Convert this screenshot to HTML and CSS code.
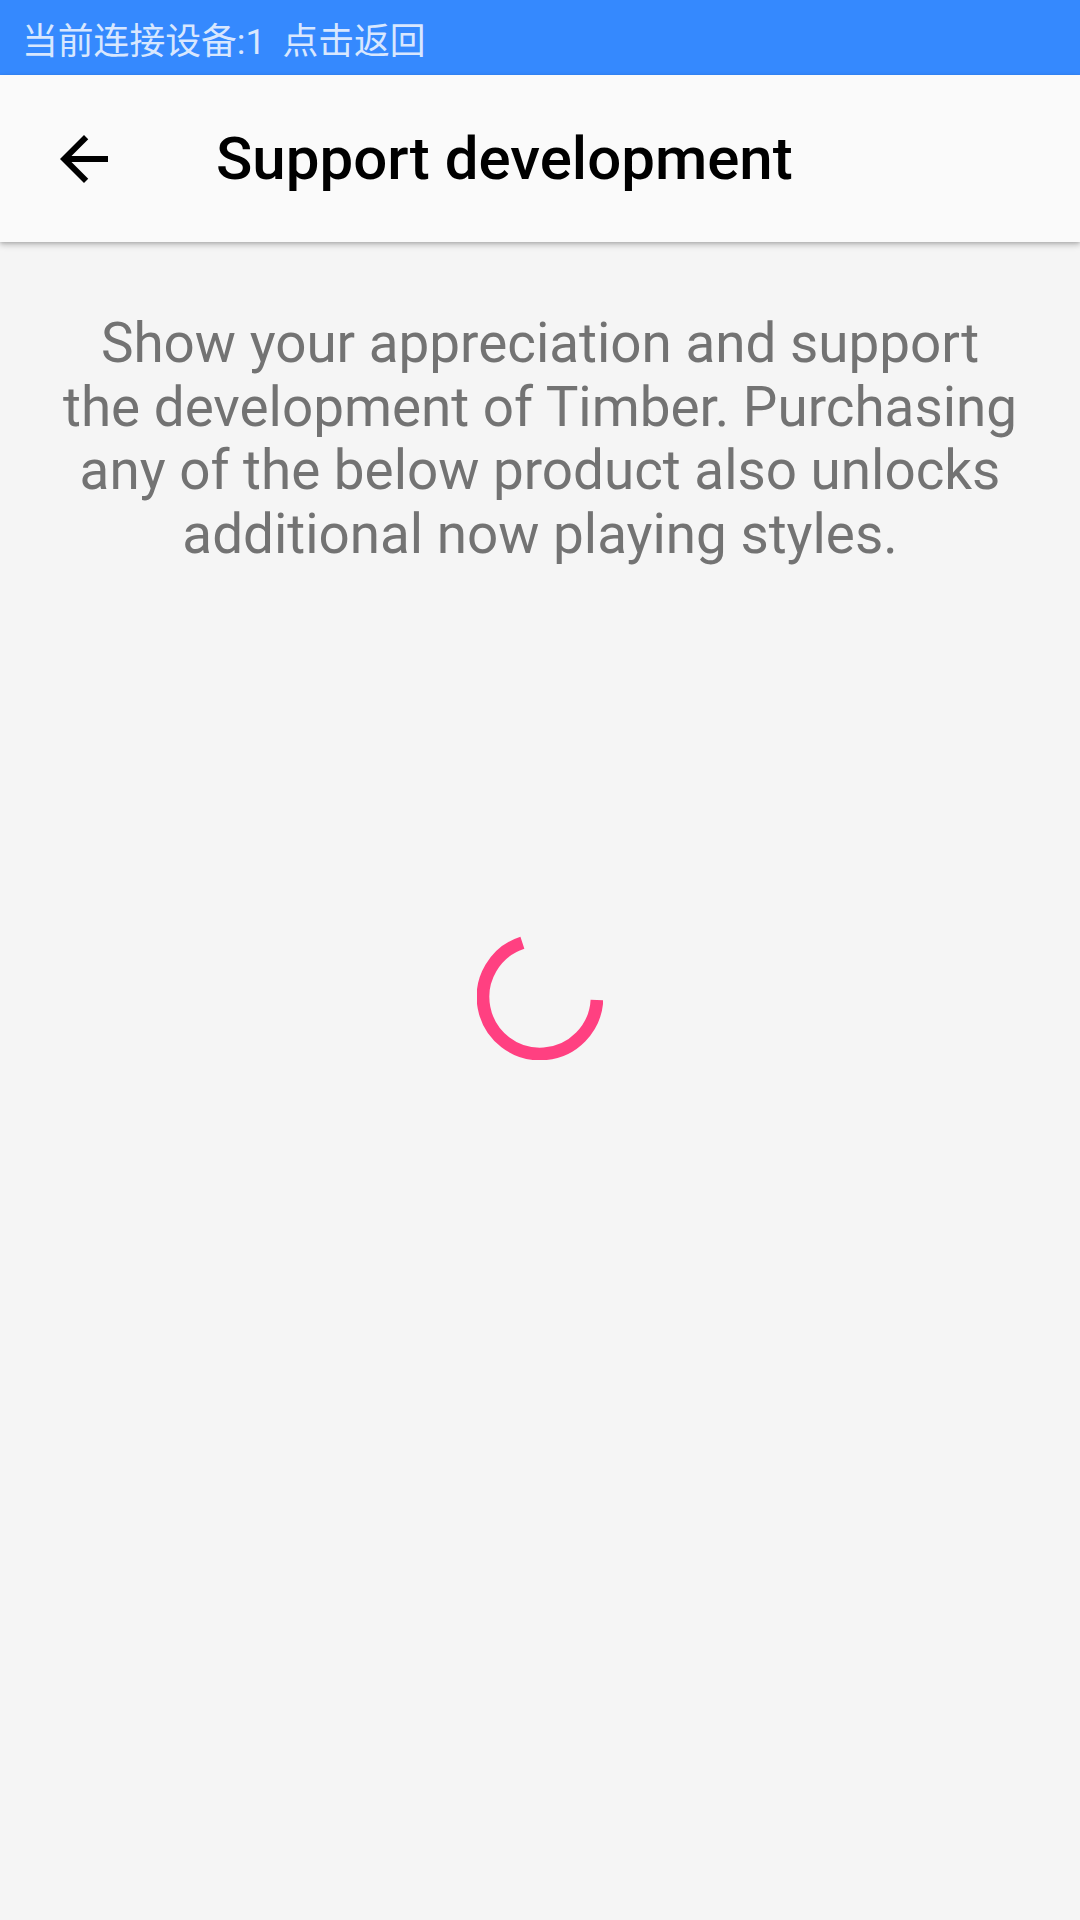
FILE: index.html
```html
<!DOCTYPE html>
<html>
<head>
<meta charset="utf-8">
<link rel="stylesheet" href="styles.css">
</head>
<body>
<div class="status">当前连接设备:1 点击返回</div>
<header class="appbar">
  <svg class="back" viewBox="0 0 24 24" width="72" height="72"><path d="M20 11H7.83l5.59-5.59L12 4l-8 8 8 8 1.41-1.41L7.83 13H20v-2z" fill="#000"/></svg>
  <h1 class="title">Support development</h1>
</header>
<main class="content">
  <p class="intro">Show your appreciation and support the development of Timber. Purchasing any of the below product also unlocks additional now playing styles.</p>
  <div class="loader">
    <svg viewBox="0 0 126 126" width="126" height="126">
      <path d="M 119.94 65.98 A 57 57 0 1 1 45.39 8.79" fill="none" stroke="#FF4081" stroke-width="12.7"/>
    </svg>
  </div>
</main>
</body>
</html>
```
FILE: styles.css
```css
* { box-sizing: border-box; }
html, body { margin: 0; padding: 0; }
body {
  width: 1080px;
  height: 1920px;
  background: #F5F5F5;
  font-family: Roboto, "Noto Sans CJK SC", sans-serif;
  overflow: hidden;
}
.status {
  height: 75px;
  background: #3589FE;
  color: #D8E7FE;
  font-family: Roboto, "Noto Sans CJK SC", sans-serif;
  font-size: 35.8px;
  word-spacing: 8px;
  display: flex;
  align-items: center;
  padding-left: 22px;
}
.appbar {
  height: 167px;
  background: #FAFAFA;
  display: flex;
  align-items: center;
  padding-left: 48px;
  box-shadow: 0 3px 6px rgba(0,0,0,0.22), 0 1px 3px rgba(0,0,0,0.12);
  position: relative;
  z-index: 1;
}
.back { flex: none; display: block; }
.title {
  margin: 0 0 0 96px;
  font-size: 60px;
  font-weight: 500;
  color: #000;
}
.content {
  padding: 70px 60px 0;
}
.intro {
  margin: 0;
  font-size: 54.8px;
  line-height: 63.5px;
  text-align: center;
  color: #737373;
}
.loader {
  display: flex;
  justify-content: center;
  margin-top: 368px;
}
.loader svg { display: block; }
```
